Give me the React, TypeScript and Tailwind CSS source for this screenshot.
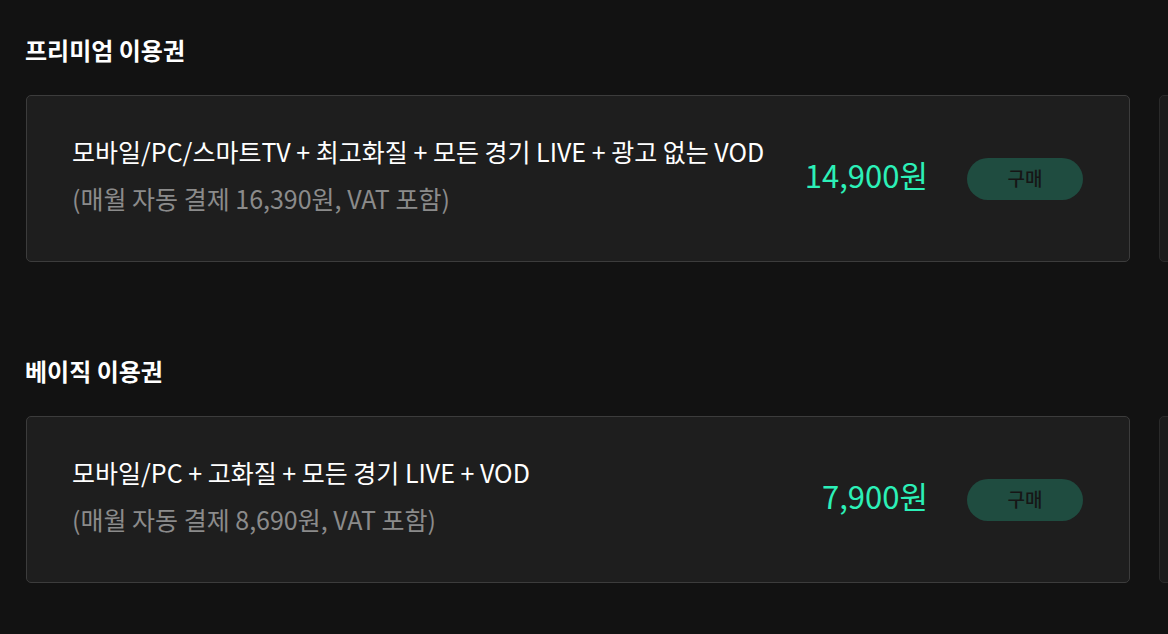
import React from "react";

type Plan = {
  title: string;
  desc: string;
  note: string;
  price: string;
};

const plans: Plan[] = [
  {
    title: "프리미엄 이용권",
    desc: "모바일/PC/스마트TV + 최고화질 + 모든 경기 LIVE + 광고 없는 VOD",
    note: "(매월 자동 결제 16,390원, VAT 포함)",
    price: "14,900원",
  },
  {
    title: "베이직 이용권",
    desc: "모바일/PC + 고화질 + 모든 경기 LIVE + VOD",
    note: "(매월 자동 결제 8,690원, VAT 포함)",
    price: "7,900원",
  },
];

const PlanSection: React.FC<{ plan: Plan }> = ({ plan }) => {
  return (
    <section>
      <h2 className="pl-[25px] text-[24px] font-bold leading-[30px] text-white">
        {plan.title}
      </h2>
      <div className="mt-[30px] flex gap-[29px] overflow-hidden pl-[26px]">
        <div className="flex h-[167px] w-[1104px] shrink-0 items-center rounded-[5px] border border-[#3c3c3c] bg-[#1e1e1e] pl-[45px] pr-[46px]">
          <div className="flex-1 pb-[8px]">
            <p className="text-[25px] leading-[32px] text-white">{plan.desc}</p>
            <p className="mt-[15px] text-[25px] leading-[32px] text-[#8b8b8b]">
              {plan.note}
            </p>
          </div>
          <span className="pb-[8px] text-[31px] leading-[40px] text-[#2cf0b8]">
            {plan.price}
          </span>
          <button className="ml-[39px] h-[42px] w-[116px] rounded-full bg-[#1f4c40] text-[19px] font-medium text-[#161616]">
            구매
          </button>
        </div>
        <div className="h-[167px] w-[400px] shrink-0 rounded-l-[5px] border border-[#2a2a2a] bg-[#1b1b1b]" />
      </div>
    </section>
  );
};

export default function App() {
  return (
    <div
      className="min-h-[634px] bg-[#121212] pt-[35px]"
      style={{ fontFamily: '"Noto Sans CJK KR", "Noto Sans", sans-serif' }}
    >
      <div className="flex flex-col gap-[94px]">
        {plans.map((p) => (
          <PlanSection key={p.title} plan={p} />
        ))}
      </div>
    </div>
  );
}
